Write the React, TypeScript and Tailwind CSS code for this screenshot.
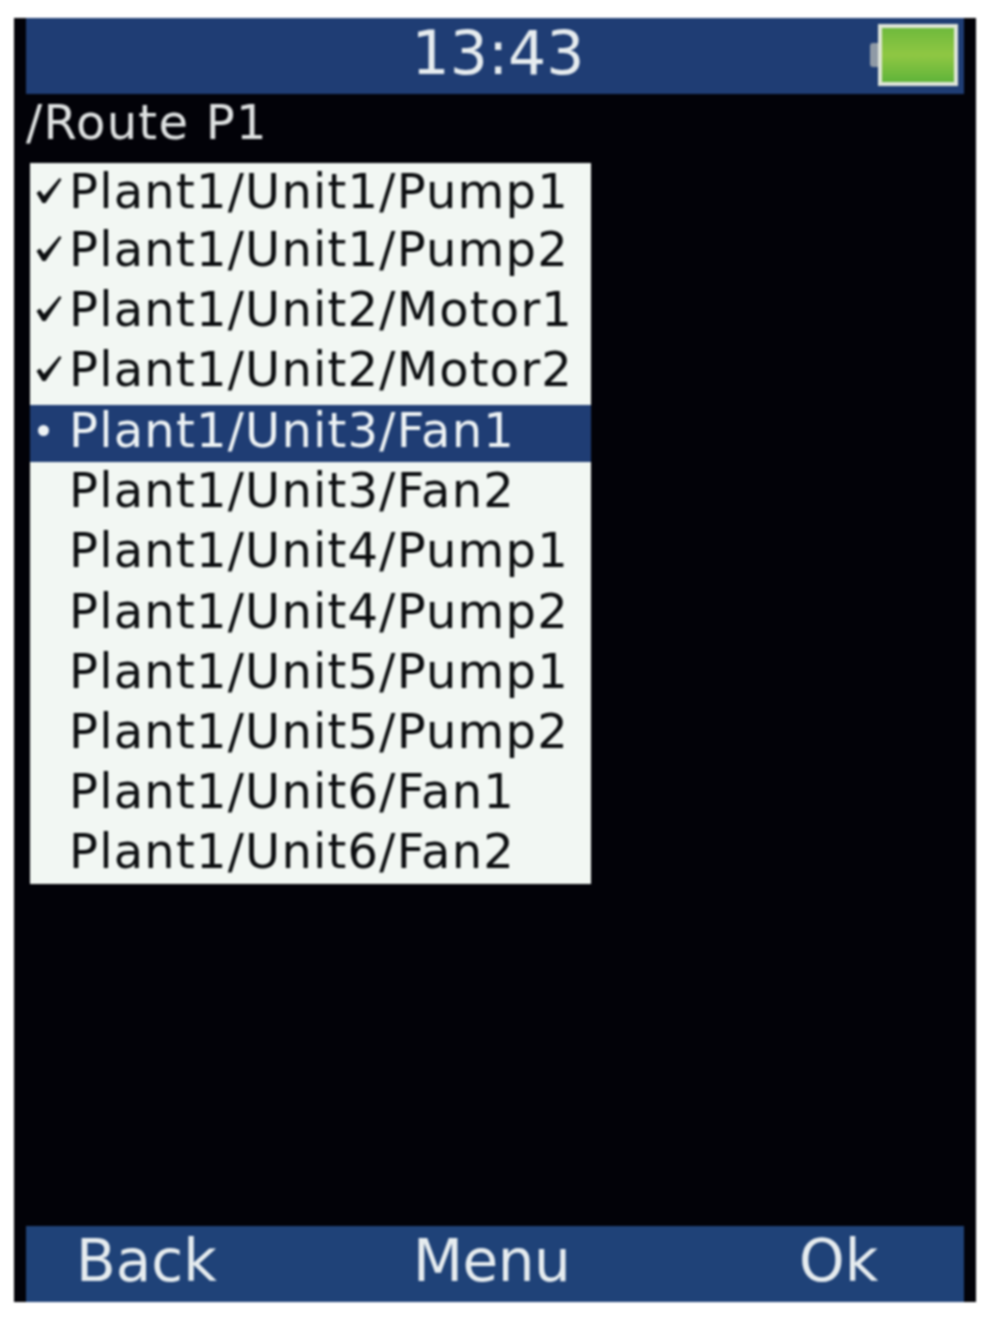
import React from 'react';

const FONT = "font-['DejaVu_Sans',sans-serif]";

const routes = [
  { name: 'Plant1/Unit1/Pump1', mark: 'done' },
  { name: 'Plant1/Unit1/Pump2', mark: 'done' },
  { name: 'Plant1/Unit2/Motor1', mark: 'done' },
  { name: 'Plant1/Unit2/Motor2', mark: 'done' },
  { name: 'Plant1/Unit3/Fan1', mark: 'current' },
  { name: 'Plant1/Unit3/Fan2' },
  { name: 'Plant1/Unit4/Pump1' },
  { name: 'Plant1/Unit4/Pump2' },
  { name: 'Plant1/Unit5/Pump1' },
  { name: 'Plant1/Unit5/Pump2' },
  { name: 'Plant1/Unit6/Fan1' },
  { name: 'Plant1/Unit6/Fan2' },
];

function Check() {
  return (
    <svg width="30" height="30" viewBox="0 0 30 30" className="ml-[4px] shrink-0">
      <path d="M2.5 17 L6 14.5 L10 20 L25.5 2 L27.5 3.5 L11.5 27 L8.5 27 Z" fill="#0c0e10" />
    </svg>
  );
}

function Battery() {
  return (
    <div className="flex items-center">
      <div className="h-[24px] w-[8px] rounded-l-[3px] bg-[#8f9aa6]" />
      <div className="h-[62px] w-[80px] border-[4px] border-[#dfe5d8] bg-gradient-to-b from-[#6fba3c] via-[#8fc743] to-[#5fb43a]" />
    </div>
  );
}

export default function App() {
  return (
    <div className={`h-[1320px] w-[990px] bg-white pl-[14px] pt-[18px] ${FONT}`}>
      <div className="flex h-[1284px] w-[962px] flex-col bg-[#020208] px-[12px] blur-[0.8px]">
        <header className="relative flex h-[76px] shrink-0 items-center justify-center bg-[#1f3d74] pb-[6px] text-[60px] leading-none text-[#e6ecef]">
          <span className="ml-[6px]">13:43</span>
          <div className="absolute right-[6px] top-[6px]">
            <Battery />
          </div>
        </header>

        <div className="mt-[1px] h-[68px] text-[48px] leading-[54px] tracking-[1.3px] text-[#dfe2e2]">/Route P1</div>

        <ul className="ml-[4px] w-[561px] bg-[#f2f7f3] pb-[3px] text-[#0c0e10]">
          {routes.map((r) => (
            <li
              key={r.name}
              className={`flex items-center whitespace-nowrap text-[48px] leading-none tracking-[1.2px] ${
                r.mark === 'current'
                  ? 'mb-[-2px] mt-[5px] h-[57px] bg-[#1f3d74] pb-[7px] text-[#eef3f5]'
                  : r.mark === 'done'
                    ? 'h-[60.1px] pb-[2px] first:h-[57px]'
                    : 'h-[60.1px]'
              }`}
            >
              <div className="flex w-[39px] shrink-0 items-center">
                {r.mark === 'done' && <Check />}
                {r.mark === 'current' && <div className="ml-[8px] size-[11px] rounded-full bg-[#eef3f5]" />}
              </div>
              {r.name}
            </li>
          ))}
        </ul>

        <footer className="mt-auto flex h-[76px] shrink-0 items-center bg-[#1f4278] pb-[6px] text-[58px] leading-none text-[#e6ecef]">
          <span className="ml-[50px] w-[337px]">Back</span>
          <span className="w-[386px] tracking-[-0.5px]">Menu</span>
          <span>Ok</span>
        </footer>
      </div>
    </div>
  );
}
